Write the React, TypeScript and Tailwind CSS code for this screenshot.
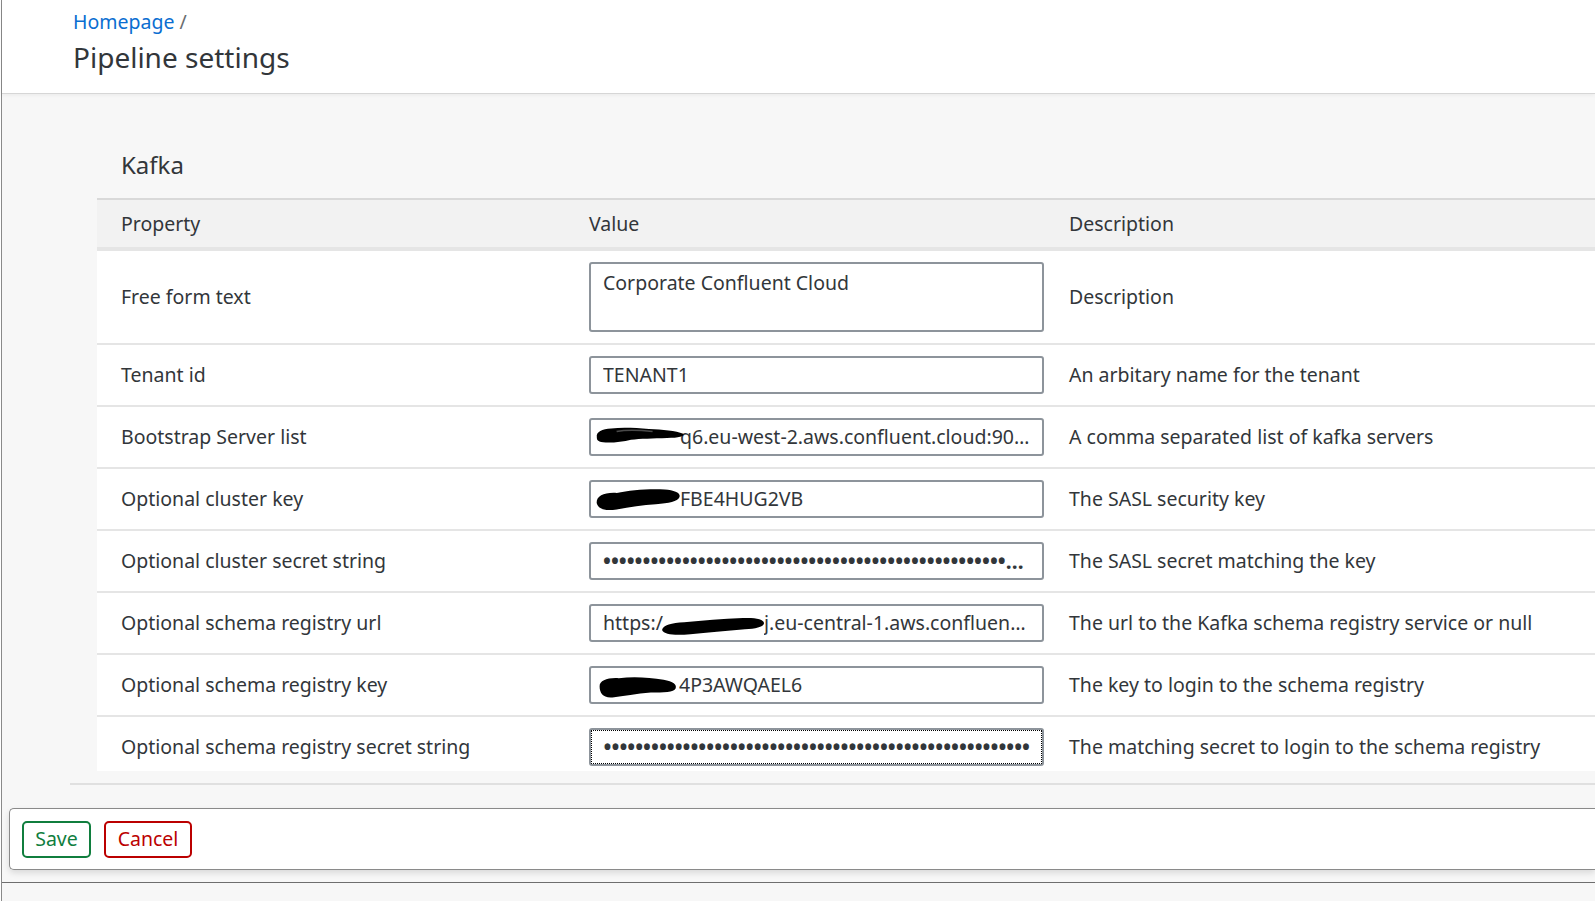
import React from "react";

type BlobProps = { w: number; h: number; className?: string; streak?: boolean; d: string };

function Blob({ w, h, className, streak, d }: BlobProps) {
  return (
    <svg
      width={w}
      height={h}
      viewBox="0 0 100 30"
      preserveAspectRatio="none"
      className={"shrink-0 " + (className ?? "")}
    >
      <path d={d} fill="#000" />
      {streak ? (
        <path d="M24 9 C36 6 50 7 64 9" stroke="#4a4a4a" strokeWidth="2.5" fill="none" />
      ) : null}
    </svg>
  );
}

const blobA =
  "M2 18 C1 10 8 4 18 4 C30 2 45 3 60 5 C75 6 90 8 98 13 C100 17 93 20 80 20 C65 21 50 21 40 23 C28 28 10 29 5 26 C2 24 2 21 2 18 Z";
const blobB =
  "M2 20 C1 12 10 7 25 8 C40 5 60 3 80 4 C92 5 99 8 97 13 C95 18 85 20 70 21 C55 22 40 24 25 27 C12 29 4 27 2 20 Z";
const blobC =
  "M1 20 C2 13 10 10 22 9 C40 7 58 4 78 3 C90 2 99 5 98 11 C97 16 90 18 80 19 C62 21 44 24 28 26 C14 28 3 27 1 20 Z";
const blobD =
  "M2 14 C2 7 12 3 26 4 C44 2 64 3 82 6 C94 8 99 12 97 17 C95 22 82 22 66 22 C48 23 32 27 18 28 C6 29 2 22 2 14 Z";

function Field({ children, focused }: { children: React.ReactNode; focused?: boolean }) {
  return (
    <div className="relative flex h-[38px] w-[455px] items-center overflow-hidden rounded-[3px] border-2 border-[#8d949b] bg-white px-[12px]">
      {focused ? <div className="pointer-events-none absolute inset-0 border border-dotted border-black" /> : null}
      {children}
    </div>
  );
}

const dots = (n: number) => "•".repeat(n);

type Row = { label: string; value: React.ReactNode; desc: string };

const rows: Row[] = [
  {
    label: "Tenant id",
    value: (
      <Field>
        <span className="min-w-0 truncate">TENANT1</span>
      </Field>
    ),
    desc: "An arbitary name for the tenant",
  },
  {
    label: "Bootstrap Server list",
    value: (
      <Field>
        <Blob w={90} h={18} d={blobA} streak className="ml-[-8px] mr-[-5px] -translate-y-[2px]" />
        <span className="min-w-0 truncate">q6.eu-west-2.aws.confluent.cloud:9092</span>
      </Field>
    ),
    desc: "A comma separated list of kafka servers",
  },
  {
    label: "Optional cluster key",
    value: (
      <Field>
        <Blob w={87} h={26} d={blobB} className="ml-[-8px] mr-[-2px]" />
        <span className="min-w-0 truncate">FBE4HUG2VB</span>
      </Field>
    ),
    desc: "The SASL security key",
  },
  {
    label: "Optional cluster secret string",
    value: (
      <Field>
        <span className="min-w-0 truncate text-[21px] font-bold">{dots(60)}</span>
      </Field>
    ),
    desc: "The SASL secret matching the key",
  },
  {
    label: "Optional schema registry url",
    value: (
      <Field>
        <span className="shrink-0">https:/</span>
        <Blob w={105} h={21} d={blobC} className="ml-[-2px] mr-[-2px] translate-y-[3px]" />
        <span className="min-w-0 truncate">j.eu-central-1.aws.confluent.cloud</span>
      </Field>
    ),
    desc: "The url to the Kafka schema registry service or null",
  },
  {
    label: "Optional schema registry key",
    value: (
      <Field>
        <Blob w={80} h={24} d={blobD} className="ml-[-5px] mr-[1px] translate-y-[2px]" />
        <span className="min-w-0 truncate">4P3AWQAEL6</span>
      </Field>
    ),
    desc: "The key to login to the schema registry",
  },
  {
    label: "Optional schema registry secret string",
    value: (
      <Field focused>
        <div className="flex min-w-0 flex-1 justify-end overflow-hidden whitespace-nowrap">
          <span className="text-[21px] font-bold">{dots(62)}</span>
        </div>
      </Field>
    ),
    desc: "The matching secret to login to the schema registry",
  },
];

export default function App() {
  return (
    <div className="h-[901px] w-full overflow-hidden bg-white pl-px font-['Noto_Sans',sans-serif] text-[19.5px] leading-[24px] text-[#32363a]">
      <div className="flex h-full flex-col border-l border-[#8a8a8a] bg-[#f7f7f7]">
        <header className="relative z-10 h-[93px] shrink-0 bg-white pl-[71px] pt-[10px] shadow-[0_1px_0_#d6d6d6,0_2px_4px_rgba(0,0,0,0.06)]">
          <div className="leading-[24px]">
            <a className="text-[#0a6ed1]">Homepage</a>
            <span className="text-[#6a6d70]"> /</span>
          </div>
          <h1 className="mt-[5px] text-[28px] font-normal leading-[36px] text-[#32363a]">Pipeline settings</h1>
        </header>

        <main className="flex flex-col">
          <div className="pl-[95px] pt-[56px]">
            <h2 className="pl-[24px] text-[24px] font-normal leading-[32px]">Kafka</h2>
            <div className="mt-[17px] h-[573px] overflow-hidden">
              <div className="flex h-[53px] items-center border-t-2 border-b-4 border-[#d9d9d9] border-b-[#e5e5e5] bg-[#f2f2f2]">
                <div className="w-[468px] shrink-0 pl-[24px]">Property</div>
                <div className="w-[480px] shrink-0 pl-[24px]">Value</div>
                <div className="flex-1 pl-[24px]">Description</div>
              </div>
              <div className="flex h-[94px] border-b-2 border-[#e5e5e5] bg-white">
                <div className="flex w-[468px] shrink-0 items-center pl-[24px]">Free form text</div>
                <div className="w-[480px] shrink-0 pl-[24px] pt-[11px]">
                  <div className="h-[70px] w-[455px] rounded-[3px] border-2 border-[#8d949b] bg-white px-[12px] pt-[7px]">
                    Corporate Confluent Cloud
                  </div>
                </div>
                <div className="flex flex-1 items-center pl-[24px]">Description</div>
              </div>
              {rows.map((r) => (
                <div key={r.label} className="flex h-[62px] border-b-2 border-[#e5e5e5] bg-white">
                  <div className="flex w-[468px] shrink-0 items-center pl-[24px]">{r.label}</div>
                  <div className="flex w-[480px] shrink-0 items-center pl-[24px]">{r.value}</div>
                  <div className="flex flex-1 items-center whitespace-nowrap pl-[24px]">{r.desc}</div>
                </div>
              ))}
            </div>
          </div>
          <div className="ml-[68px] mt-[12px] h-[2px] bg-[#e0e0e0]" />
          <div className="ml-[7px] mt-[23px] flex h-[62px] items-center gap-[13px] rounded-l-[5px] border border-r-0 border-[#8a8a8a] bg-white pl-[12px] shadow-[0_3px_6px_rgba(0,0,0,0.12)]">
            <button className="h-[37px] w-[69px] rounded-[5px] border-2 border-[#107e3e] bg-white text-[19.5px] text-[#107e3e]">
              Save
            </button>
            <button className="h-[37px] w-[88px] rounded-[5px] border-2 border-[#bb0000] bg-white text-[19.5px] text-[#bb0000]">
              Cancel
            </button>
          </div>
          <div className="mt-[12px] h-px bg-[#6e6e6e]" />
        </main>
      </div>
    </div>
  );
}
